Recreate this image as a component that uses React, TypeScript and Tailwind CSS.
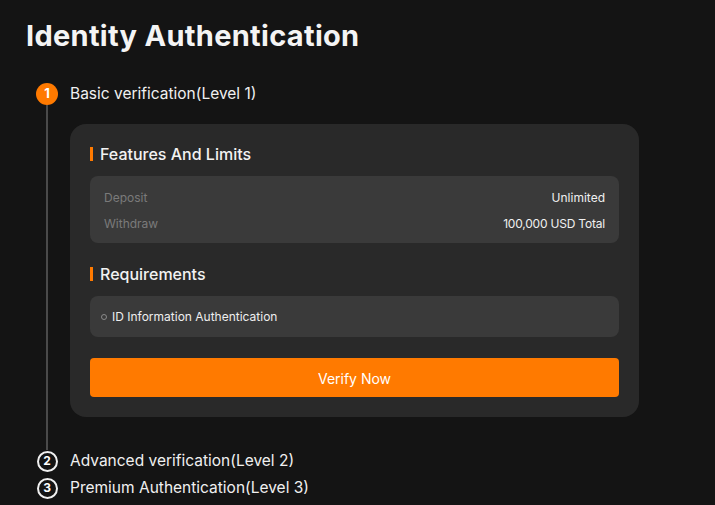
import React from 'react';

const font = { fontFamily: 'Inter, "Noto Sans", sans-serif' };

const SectionTitle: React.FC<{ children: React.ReactNode }> = ({ children }) => (
  <div className="flex items-center gap-[7px] h-[20px]">
    <span className="w-[3px] h-[14px] bg-[#ff7a00]" />
    <span className="text-[16px] font-medium text-[#f2f2f2] leading-none">{children}</span>
  </div>
);

const App: React.FC = () => {
  return (
    <div className="w-[715px] h-[505px] overflow-hidden bg-[#141414] text-white" style={font}>
      <div className="pl-[26px] pt-[18px]">
        <h1 className="text-[29px] font-bold leading-[36px] text-[#f4f4f4] tracking-[0.3px]">Identity Authentication</h1>
      </div>

      <div className="pl-[36px] pt-[29px]">
        {/* step 1 */}
        <div className="flex">
          <div className="w-[22px] flex flex-col items-center">
            <div className="w-[22px] h-[22px] rounded-full bg-[#ff7a00] flex items-center justify-center text-[13px] font-bold">1</div>
            <div className="w-[2px] bg-[#4a4a4a] h-[345px]" />
          </div>
          <div className="ml-[12px]">
            <div className="h-[22px] flex items-center text-[15.5px] text-[#f0f0f0]">Basic verification(Level 1)</div>
            <div className="mt-[19px] w-[569px] h-[293px] rounded-[16px] bg-[#292929] px-[20px] pt-[20px]">
              <SectionTitle>Features And Limits</SectionTitle>
              <div className="mt-[12px] h-[67px] rounded-[8px] bg-[#3a3a3a] px-[14px] pt-[12px] text-[12px]">
                <div className="flex justify-between h-[20px] items-center">
                  <span className="text-[#7a7a7a]">Deposit</span>
                  <span className="text-[#f0f0f0]">Unlimited</span>
                </div>
                <div className="flex justify-between h-[20px] mt-[6px] items-center">
                  <span className="text-[#7a7a7a]">Withdraw</span>
                  <span className="text-[#f0f0f0] tracking-[-0.2px]">100,000 USD Total</span>
                </div>
              </div>
              <div className="mt-[21px]">
                <SectionTitle>Requirements</SectionTitle>
              </div>
              <div className="mt-[12px] h-[41px] rounded-[8px] bg-[#3a3a3a] px-[11px] pt-[1px] flex items-center gap-[5px] text-[12px] text-[#eeeeee]">
                <span className="w-[6px] h-[6px] rounded-full border border-[#8a8a8a]" />
                <span>ID Information Authentication</span>
              </div>
              <button className="mt-[21px] w-full h-[39px] rounded-[4px] bg-[#ff7a00] pt-[1px] text-[14px] text-white">Verify Now</button>
            </div>
          </div>
        </div>
        {/* step 2 */}
        <div className="flex items-center h-[22px]">
          <div className="w-[22px] flex justify-center">
            <div className="w-[21px] h-[21px] rounded-full border-2 border-[#f0f0f0] flex items-center justify-center text-[12px] font-bold">2</div>
          </div>
          <span className="ml-[12px] text-[15.5px] text-[#f0f0f0]">Advanced verification(Level 2)</span>
        </div>
        <div className="flex items-center mt-[5px] h-[22px]">
          <div className="w-[22px] flex justify-center">
            <div className="w-[21px] h-[21px] rounded-full border-2 border-[#f0f0f0] flex items-center justify-center text-[12px] font-bold">3</div>
          </div>
          <span className="ml-[12px] text-[15.5px] text-[#f0f0f0]">Premium Authentication(Level 3)</span>
        </div>
      </div>
    </div>
  );
};

export default App;
